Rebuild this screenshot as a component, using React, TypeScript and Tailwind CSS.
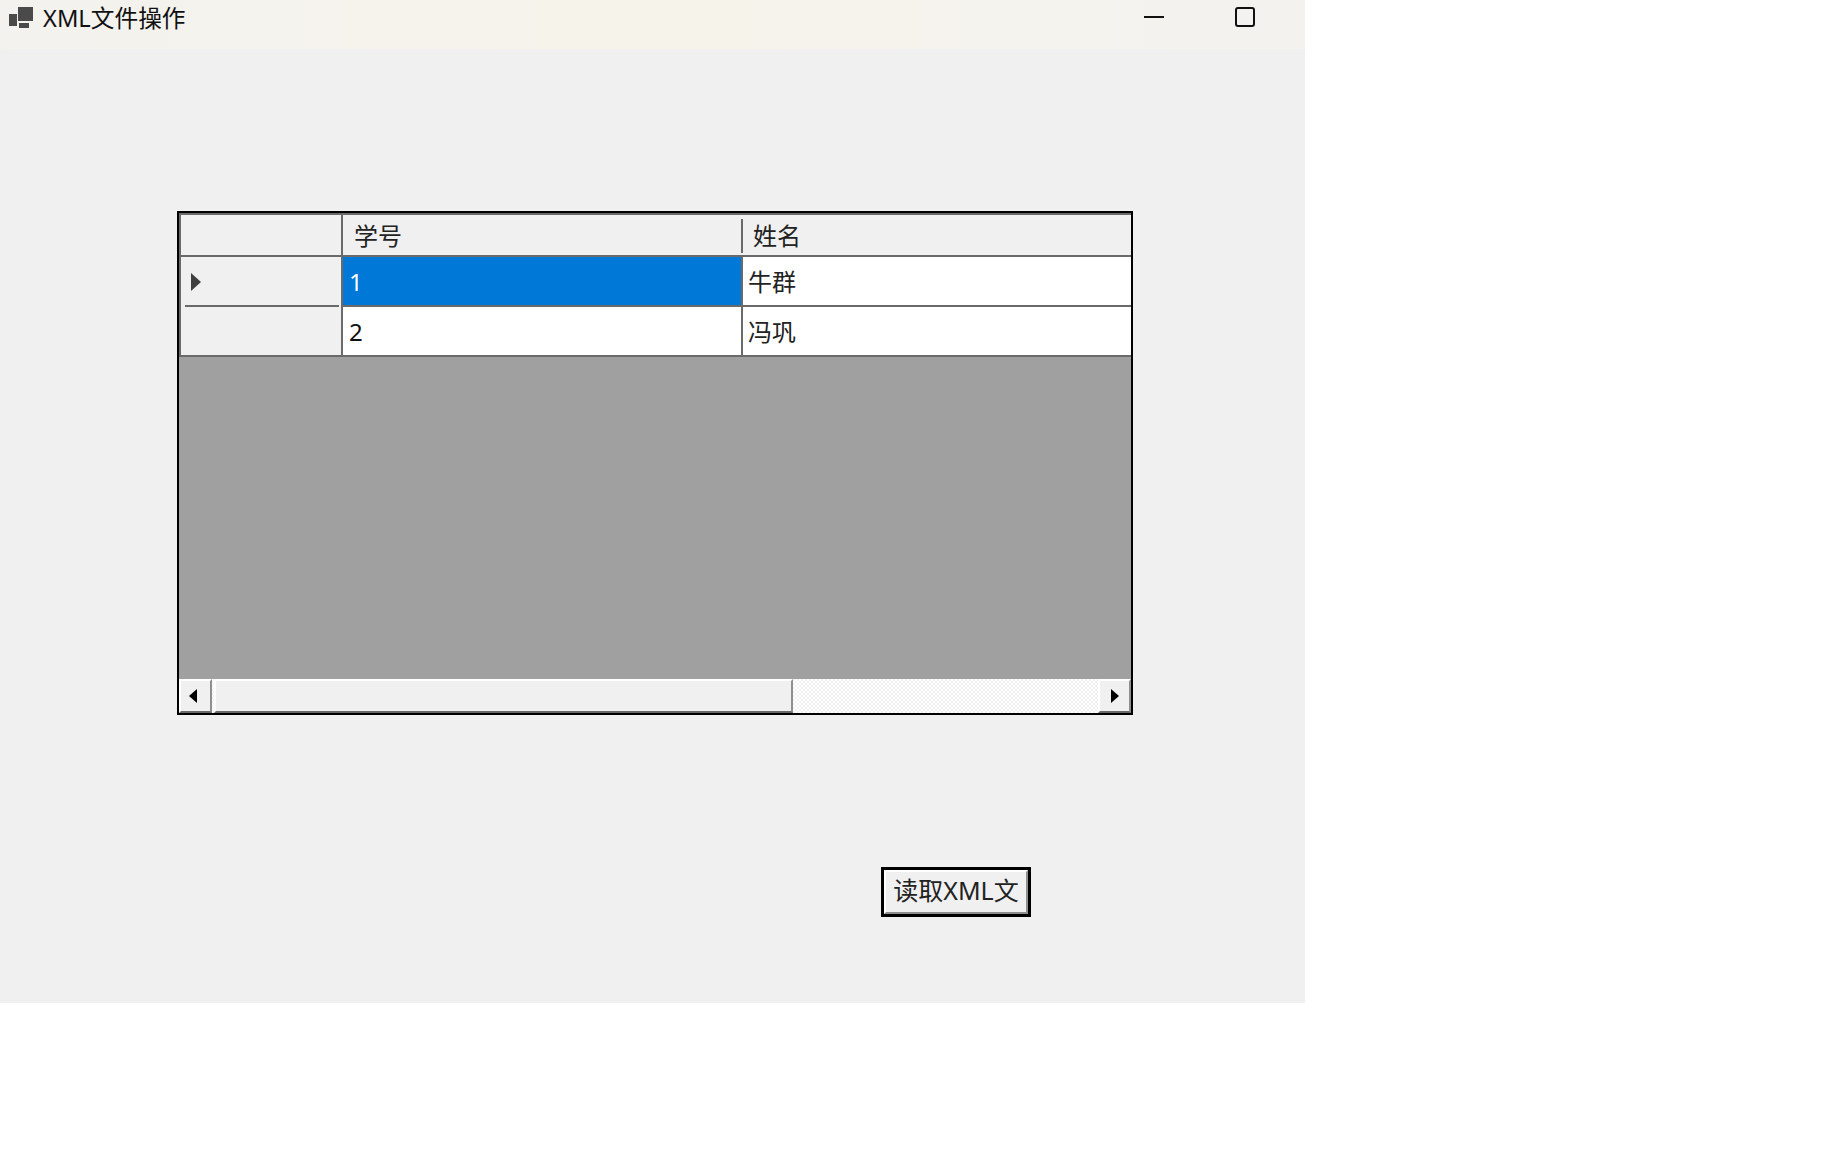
import React from "react";

const FONT = "font-['Noto_Sans','Noto_Sans_CJK_SC',sans-serif]";

const rows = [
  { id: "1", name: "牛群", selected: true },
  { id: "2", name: "冯巩", selected: false },
];

const WindowIcon = () => (
  <svg width="25" height="22" viewBox="0 0 25 22" className="shrink-0">
    <rect x="9" y="0" width="15" height="14" fill="#4a4a4a" />
    <rect x="0" y="7" width="8" height="12" fill="#4a4a4a" />
    <rect x="10" y="16" width="10" height="5" fill="#4a4a4a" />
  </svg>
);

const ScrollButton = ({ dir }: { dir: "left" | "right" }) => (
  <div
    className={`w-[33px] h-full flex items-center justify-center bg-[#f0f0f0] border-2 border-t-white border-l-white border-r-[#8f8f8f] border-b-[#6a6a6a] ${
      dir === "left" ? "pr-[6px]" : "pl-[1px]"
    }`}
  >
    <svg width="8" height="14" viewBox="0 0 8 14">
      <path d={dir === "left" ? "M8 0V14L0 7Z" : "M0 0V14L8 7Z"} fill="#000" />
    </svg>
  </div>
);

const App = () => {
  return (
    <div className={`w-[1843px] h-[1152px] bg-white ${FONT}`}>
      <div className="w-[1305px] h-[1003px] bg-[#f0f0f0]">
        {/* Title bar */}
        <div className="h-[49px] flex bg-gradient-to-r from-[#f3f2ee] via-[#f6f3ea] to-[#f3f2ef] pl-[9px] pr-[50px]">
          <div className="flex items-center gap-[9px] h-[36px]">
            <WindowIcon />
            <span className="text-[23.7px] leading-[36px] text-[#111]">XML文件操作</span>
          </div>
          <div className="ml-auto flex items-start gap-[71px] pt-[7px]">
            <div className="w-[20px] h-[2px] bg-[#111] mt-[9px]" />
            <div className="w-[20px] h-[20px] border-2 border-[#111] rounded-[3px]" />
          </div>
        </div>

        {/* Data grid */}
        <div className="ml-[177px] mt-[162px] w-[956px] h-[504px] border-2 border-black bg-[#a0a0a0] flex flex-col">
          <div className="h-[44px] flex bg-[#f0f0f0] border-t-2 border-b-2 border-[#6a6a6a] text-[24px] text-[#222]">
            <div className="w-[164px] border-l-2 border-r-2 border-[#6a6a6a]" />
            <div className="w-[400px] pl-[11px] leading-[42px] relative">
              学号
              <div className="absolute right-0 top-[4px] bottom-[2px] w-[2px] bg-[#6a6a6a]" />
            </div>
            <div className="flex-1 pl-[10px] leading-[42px]">姓名</div>
          </div>
          {rows.map((row) => (
            <div key={row.id} className="h-[50px] flex text-[24px]">
              <div
                className={`w-[164px] bg-[#f0f0f0] border-l-2 border-r-2 border-[#6a6a6a] pl-[10px] pt-[16px] ${
                  row.selected ? "" : "border-b-2"
                }`}
              >
                {row.selected && (
                  <>
                    <svg width="10" height="18" viewBox="0 0 10 18" className="block">
                      <path d="M0 0V18L10 9Z" fill="#404040" />
                    </svg>
                    <div className="h-[2px] bg-[#6a6a6a] -ml-[6px] mr-[2px] mt-[14px]" />
                  </>
                )}
              </div>
              <div
                className={`w-[400px] pl-[6px] leading-[50px] border-r-2 border-b-2 border-[#6a6a6a] ${
                  row.selected ? "bg-[#0078d7] text-white" : "bg-white text-[#111]"
                }`}
              >
                {row.id}
              </div>
              <div className="flex-1 bg-white pl-[5px] leading-[50px] text-[#222] border-b-2 border-[#6a6a6a]">
                {row.name}
              </div>
            </div>
          ))}
          <div className="flex-1" />
          {/* Horizontal scrollbar */}
          <div className="h-[34px] flex bg-[repeating-conic-gradient(#f1f1f1_0_25%,#ffffff_0_50%)] bg-[length:4px_4px]">
            <ScrollButton dir="left" />
            <div className="ml-[2px] w-[579px] h-full bg-[#f0f0f0] border-2 border-t-white border-l-white border-r-[#8f8f8f] border-b-[#6a6a6a]" />
            <div className="flex-1" />
            <ScrollButton dir="right" />
          </div>
        </div>

        {/* Read button */}
        <div className="ml-[881px] mt-[152px] w-[150px] h-[50px] border-[3px] border-black bg-[#f0f0f0]">
          <div className="h-full pb-[4px] border-2 border-t-white border-l-white border-r-[#8f8f8f] border-b-[#8f8f8f] flex items-center justify-center text-[25px] leading-none text-[#222] whitespace-nowrap overflow-hidden">
            读取XML文
          </div>
        </div>
      </div>
    </div>
  );
};

export default App;
